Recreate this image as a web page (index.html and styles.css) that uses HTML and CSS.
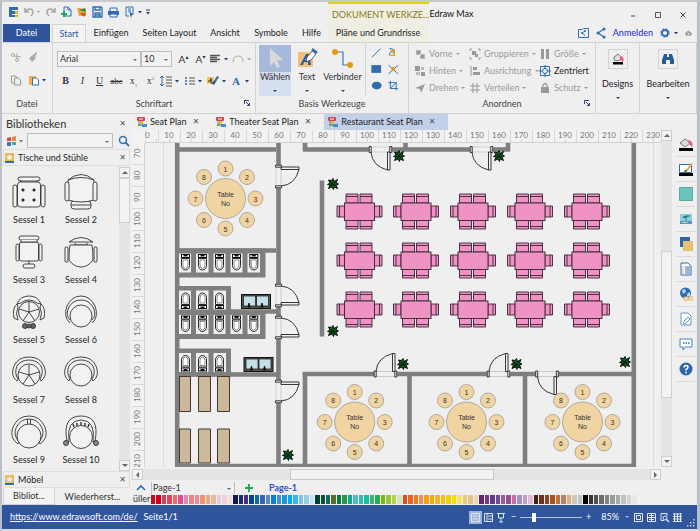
FILE: index.html
```
<!DOCTYPE html>
<html lang="de">
<head>
  <meta charset="UTF-8">
  <meta name="viewport" content="width=device-width, initial-scale=1.0">
  <title>Edraw Max</title>
  <link rel="stylesheet" href="styles.css">
</head>
<body>
  <!-- shared shapes -->
  <svg class="defs" width="0" height="0" aria-hidden="true">
    <defs>
      <symbol id="doc" viewBox="0 0 10 10" overflow="visible">
        <rect x="0" y="0" width="8" height="4" rx="1" fill="#c8464c"/>
        <path d="M2 2h4" stroke="#fff" stroke-width="1"/>
        <path d="M2 4v4h3" stroke="#4a7ebb" fill="none"/>
        <rect x="3" y="4" width="3" height="3" fill="#f0b428"/>
        <rect x="5" y="7" width="5" height="3" fill="#3f8ee0"/>
        <rect x="1" y="7" width="3" height="2" fill="#6ab04c"/>
      </symbol>
      <symbol id="star" viewBox="0 0 9 10">
        <rect width="9" height="8" fill="#e9b85c"/>
        <rect y="8" width="9" height="2" fill="#2f6db0"/>
        <path d="M4.500 1l1 2.200 2.300.2-1.700 1.600.5 2.300-2.100-1.200-2.100 1.200.5-2.300L1.200 3.400l2.300-.2z" fill="#fff"/>
      </symbol>
      <g id="toilet">
        <rect x="-4" y="-9" width="8" height="3" fill="#fff" stroke="#111"/>
        <path d="M-2-9h4v2h-4z" fill="#111"/>
        <path d="M-4-5h8v7a4 4.500 0 0 1-8 0z" fill="#fff" stroke="#111" stroke-width=".9"/>
        <path d="M-2.500-3.500h5v5a2.500 3.500 0 0 1-5 0z" fill="none" stroke="#444" stroke-width=".6"/>
      </g>
      <g id="stalls5">
        <path d="M179 0h86.500v29h-86.500z" fill="#7f7f7f"/>
        <path d="M179 5h12v19h-12zM196 5h12.500v19h-12.500zM213.500 5h12v19h-12zM230.500 5h12v19h-12zM247.500 5h12.500v19h-12.500z" fill="#f0f0f0"/>
        <use href="#toilet" x="185.500" y="15"/><use href="#toilet" x="202.500" y="15"/><use href="#toilet" x="219.500" y="15"/><use href="#toilet" x="236.500" y="15"/><use href="#toilet" x="253.800" y="15"/>
      </g>
      <g id="stalls3">
        <path d="M179 0h52v28h-52z" fill="#7f7f7f"/>
        <path d="M179 4.500h12v19h-12zM196 4.500h12.500v19h-12.500zM213.500 4.500h12.500v19h-12.500z" fill="#f0f0f0"/>
        <g transform="translate(0 13.500) scale(1 -1)"><use href="#toilet" x="185.500"/><use href="#toilet" x="202.500"/><use href="#toilet" x="219.500"/></g>
      </g>
      <g id="sink">
        <rect x=".5" y=".5" width="29" height="14" fill="#555" stroke="#111"/>
        <rect x="2.500" y="2" width="12" height="10" fill="#c4dfe6" stroke="#111" stroke-width=".7"/>
        <rect x="15.500" y="2" width="12" height="10" fill="#c4dfe6" stroke="#111" stroke-width=".7"/>
        <path d="M7 13l1-4 1 4zM20 13l1-4 1 4z" fill="#111" stroke="#111"/>
      </g>
      <g id="seats" stroke="#3a2433" stroke-width=".9" fill="#ef93c5">
        <path d="M-13.500-18h12v9h-12zM.5-18h12v9h-12zM-13.500 8h12v9h-12zM.5 8h12v9h-12z"/>
        <path d="M-22.500-6h7.500v11h-7.500zM15-6h7.500v11H15z"/>
        <path d="M-13.500-15.500h12M.5-15.500h12M-13.500 14.500h12M.5 14.500h12M-20-6v11M20-6v11" fill="none"/>
        <rect x="-15" y="-9" width="30" height="17.500"/>
      </g>
      <g id="round">
        <g fill="#f0d5a3" stroke="#a8a29a" stroke-width=".9">
          <circle r="20"/>
          <circle cy="-30" r="7.500"/><circle cx="21.500" cy="-21.500" r="7.500"/><circle cx="30" r="7.500"/><circle cx="21.500" cy="21.500" r="7.500"/>
          <circle cy="30" r="7.500"/><circle cx="-21.500" cy="21.500" r="7.500"/><circle cx="-30" r="7.500"/><circle cx="-21.500" cy="-21.500" r="7.500"/>
        </g>
        <g class="plan-text">
          <text y="-2">Table</text><text y="7">No</text>
          <text y="-27">1</text><text x="21.500" y="-19">2</text><text x="30" y="3">3</text><text x="21.500" y="24">4</text>
          <text y="33">5</text><text x="-21.500" y="24">6</text><text x="-30" y="3">7</text><text x="-21.500" y="-19">8</text>
        </g>
      </g>
      <g id="plant">
        <path d="M0-5.500l1 3 3.500-2-1.500 3.500 2.500 1-2.500 1 1.500 3.500-3.500-1.500-.5 2.500-1.500-2.500-3.500 1.500 1.500-3.500-2.500-.5 2.500-1.500-1.500-3 3 .5z" fill="#0d5a1c" stroke="#06120a"/>
        <path d="M-3-2l6 4M2-3l-4 6M-3 1h5" stroke="#06120a" stroke-width=".8"/>
      </g>
      <!-- door in a 23 wide opening, swinging down to the right -->
      <g id="door" fill="#f0f0f0" stroke="#222" stroke-width=".9">
        <path d="M0 0h23v5H0z" stroke="#bbb" stroke-width=".6"/>
        <path d="M18.500 5h2.500v18h-2.500z"/>
        <path d="M2 5q1 14 16.500 18" fill="none"/>
        <path d="M.2-.5h2v6h-2zM20.800-.5h2v6h-2z"/>
      </g>
    </defs>
  </svg>

  <header class="titlebar">
    <div class="quick">
      <svg width="152" height="16" viewBox="6 4 152 16" fill="none">
        <path d="M9 7h9v3h-6v1h6v3h-6v1h6v2H9z" fill="#2f6db0"/><path d="M15 11h3v3h-3zM15 15h3v2h-3z" fill="#f0b428"/>
        <path d="M25 8v4h4M25.500 12c2-4 7-4 7.500 0q0 2-2 4M55 8v4h-4M54.500 12c-2-4-7-4-7.500 0q0 2 2 4" stroke="#a8a8a8" stroke-width="1.600"/>
        <path d="M37 11h3l-1.500 2z" fill="#999"/>
        <path d="M64 7h4l3 3v6h-7zM68 7v3h3" stroke="#2f6db0"/><path d="M61 14h6M64 11v6" stroke="#23a565" stroke-width="2"/>
        <path d="M77 8h4l1 1h4v7h-7z" fill="#e7a63a"/><path d="M79 10l6-2 1 4z" fill="#2b8d42"/><path d="M80 13h6l-2 4z" fill="#c65b2c"/>
        <path d="M93 7h8l1 1v9h-9zM95 7v3h5V7M95 17v-4h5v4M95 15h5" stroke="#2f6db0" stroke-width="1.300"/>
        <path d="M108 11h11v4h-11z" fill="#2f6db0"/><path d="M110 11V8h7v3M110 14h7v3h-7z" fill="#efefef" stroke="#2f6db0"/>
        <path d="M126 7h7v7M126 7v9h3M128 9h3M128 11h3" stroke="#2f6db0"/><path d="M129 11l5 4-2 0-1 3z" fill="#2f6db0"/>
        <path d="M138 11h4l-2 2.500zM146 12h4l-2 2.500z" fill="#26406f"/><path d="M146 10h4" stroke="#26406f"/>
      </svg>
    </div>
    <div class="context-title">DOKUMENT WERKZE...</div>
    <h1>Edraw Max</h1>
    <div class="window-buttons">
      <button aria-label="Minimieren"><svg width="8" height="8"><path d="M2 5h4" stroke="#444"/></svg></button>
      <button aria-label="Maximieren"><svg width="8" height="8"><path d="M1.500 1.500h5v5h-5z" fill="none" stroke="#555"/></svg></button>
      <button aria-label="Schließen"><svg width="8" height="8"><path d="M1.500 1.500l5 5M6.500 1.500l-5 5" stroke="#444"/></svg></button>
    </div>
  </header>

  <nav class="menu">
    <button class="menu-file">Datei</button>
    <button class="menu-start">Start</button>
    <button class="menu-insert">Einfügen</button>
    <button class="menu-layout">Seiten Layout</button>
    <button class="menu-view">Ansicht</button>
    <button class="menu-symbols">Symbole</button>
    <button class="menu-help">Hilfe</button>
    <button class="menu-plans">Pläne und Grundrisse</button>
    <div class="account">
      <svg width="28" height="12" viewBox="0 0 28 12" fill="none" stroke="#2f6db0">
        <path d="M.5 2.500h4l1-1h5v9H.5z"/><path d="M7 4L4 6l3 2.500"/><circle cx="7" cy="4" r=".7"/><circle cx="4" cy="6" r=".7"/>
        <path d="M26 2l-6 4 6 4" stroke-width="1.200"/><g fill="#2f6db0" stroke="none"><circle cx="26" cy="2" r="1.500"/><circle cx="20" cy="6" r="1.500"/><circle cx="26" cy="10" r="1.500"/></g>
      </svg>
      <a href="#login">Anmelden</a>
      <svg width="32" height="12" viewBox="0 0 32 12" fill="none">
        <circle cx="5" cy="6" r="3" stroke="#2f6db0" stroke-width="1.800"/><circle cx="5" cy="6" r="4.300" stroke="#2f6db0" stroke-dasharray="1.700 1.700"/>
        <path d="M14 5h4l-2 2.500z" fill="#26406f"/><path d="M26 8h5V6l-2.500-2L26 6zM26.500 7l2-1.500 2 1.500" stroke="#666" stroke-width=".8"/>
      </svg>
    </div>
  </nav>

  <section class="ribbon">
    <div class="group group-file">
      <div class="group-body">
        <svg width="42" height="48" viewBox="6 44 42 48" fill="none">
          <g stroke="#aaa"><circle cx="13" cy="56" r="1.500"/><circle cx="17" cy="61" r="1.500"/><path d="M14 57l7 1M17 60V54"/></g>
          <path d="M29 59l4-3 3 3-4 4zM33 56l3-3 1 1-2 4z" fill="#aaa"/>
          <g stroke="#999"><path d="M11.500 77h4l2 2v5h-6z"/><path d="M14.500 79h4l2 2v5h-6z" fill="#efefef"/></g>
          <path d="M29 77h7v9h-7z" fill="#f0b050"/><path d="M32.500 79h4l2 2v5h-6z" fill="#fff" stroke="#2f6db0"/><path d="M42 80h4l-2 2.500z" fill="#26406f"/>
        </svg>
      </div>
      <h2>Datei</h2>
    </div>

    <div class="group group-font">
      <div class="group-body">
        <div class="font-row">
          <label class="select-wrap font-name"><select aria-label="Schriftart"><option>Arial</option></select></label>
          <label class="select-wrap font-size"><select aria-label="Schriftgröße"><option>10</option></select></label>
          <button class="big-a">A<sup>▴</sup></button>
          <button class="big-a">A<sup>▾</sup></button>
          <svg width="42" height="14" viewBox="0 0 42 14" fill="none"><path d="M1 3.500h10M1 5.500h7M1 7.500h10M1 9.500h7" stroke="#555" stroke-width="1.400"/><path d="M15 6h4l-2 2.500z" fill="#26406f"/><path d="M24 10q0-6 5-6t5 6" stroke="#aaa"/><path d="M38 6h4l-2 2.500z" fill="#aaa"/></svg>
        </div>
        <div class="style-row">
          <button><b>B</b></button><button><i>I</i></button><button><u>U</u></button><button class="strike">abc</button>
          <button>x<sub>1</sub></button><button>x<sup>2</sup></button>
          <svg width="92" height="14" viewBox="160 74 92 14" fill="none">
            <path d="M163 76v10M161 78l2-2 2 2M161 84l2 2 2-2" stroke="#2f6db0"/><path d="M167 77h6M167 80h6M167 83h6M167 86h6" stroke="#555"/>
            <path d="M176 80h4l-2 2.500zM199 80h4l-2 2.500zM223 80h4l-2 2.500zM246 80h4l-2 2.500z" fill="#26406f"/>
            <path d="M186 78h2M186 81h2M186 84h2" stroke="#2f6db0" stroke-width="1.500"/><path d="M190 78h6M190 81h6M190 84h6" stroke="#555"/>
            <path d="M208 77h7v7h-7z" fill="#f5c25b"/><path d="M213 84l5-8 2 1-5 8z" fill="#2f6db0"/><path d="M209 81h3v-2M212 78v5h3v-2" stroke="#333"/>
            <text class="font-color" x="233" y="85">A</text>
          </svg>
        </div>
      </div>
      <h2>Schriftart</h2>
      <svg class="launcher" width="6" height="6"><path d="M.5 4V.5H5M2 2l3 3M5.500 3v2.500H3" fill="none" stroke="#26406f"/></svg>
    </div>

    <div class="group group-tools">
      <div class="group-body">
        <button class="tool selected"><svg width="24" height="26"><path d="M7 3l13 12-6 .5 3 6-3 1.500-3-6-4 4z" fill="#d8d8d8"/></svg>Wählen<i class="arrow"></i></button>
        <button class="tool"><svg width="24" height="26"><path d="M3 7h15v15H3z" fill="#f2c078"/><path d="M5 20h3l1-3h4v3h3l-2-11h-3zM10 15l3-4v4z" fill="#2560a5"/><path d="M12 12l5-6 4 3-5 6-5 2z" fill="#fff" stroke="#335" stroke-width=".8"/><path d="M17 4l5 4" stroke="#2f6db0" stroke-width="2.500"/></svg>Text<i class="arrow"></i></button>
        <button class="tool tool-wide"><svg width="24" height="26"><path d="M4 7h8v13h8" fill="none" stroke="#3a79bd" stroke-width="1.200"/><circle cx="4" cy="7" r="3" fill="#e79a0c"/><circle cx="19" cy="20" r="3" fill="#e79a0c"/></svg>Verbinder<i class="arrow"></i></button>
        <svg class="shapes" width="38" height="52" viewBox="368 44 38 52" fill="none">
          <path d="M374 58l9-9M392 49q6 0 5 4-5-2-5 3" stroke="#2f74b8"/><path d="M393 51h4v5h-4" stroke="#e79a0c" stroke-width="1.500"/>
          <path d="M373.500 66h10v8h-10z" fill="#2f6db0"/><path d="M391 66l10 9M401 66l-10 9" stroke="#2f74b8"/><circle cx="396" cy="70" r="2" fill="#e79a0c"/>
          <ellipse cx="379" cy="87" rx="5" ry="4" fill="#2f6db0"/><path d="M393 82v8h8M391 84h8v8M393 90l6-6" stroke="#2f6db0"/>
        </svg>
      </div>
      <h2>Basis Werkzeuge</h2>
    </div>

    <div class="group group-arrange">
      <div class="group-body arrange">
        <button><svg width="12" height="12"><path d="M2 2h5v5H2zM6 6h5v5H6z" fill="#999" stroke="#efefef" stroke-width=".6"/></svg>Vorne<i class="arrow"></i></button>
        <button><svg width="12" height="12"><path d="M1 3V1h2M9 1h2v2M11 9v2H9M3 11H1V9" stroke="#999" fill="none"/><path d="M3 3h4v4H3zM6 6h3v3H6z" fill="#999"/></svg>Gruppieren<i class="arrow"></i></button>
        <button><svg width="12" height="12"><path d="M2 1h3v10H2zM7 1h3v10H7z" fill="#999"/></svg>Größe<i class="arrow"></i></button>
        <button><svg width="12" height="12"><path d="M1 1h5v5H1zM7 7h4v4H7z" fill="#999"/><path d="M7 2h3v3H7zM2 7h4v3H2z" fill="#bbb"/></svg>Hinten<i class="arrow"></i></button>
        <button><svg width="12" height="12"><path d="M2 1v10" stroke="#999"/><path d="M4 2h4v3H4zM4 7h7v3H4z" fill="#999"/></svg>Ausrichtung<i class="arrow"></i></button>
        <button class="on"><svg width="12" height="12"><path d="M1.500 1.500h9v9h-9z" fill="none" stroke="#2f6db0"/><circle cx="6" cy="6" r="2.500" fill="none" stroke="#2f6db0"/><path d="M6 0v4M6 8v4M0 6h4M8 6h4" stroke="#2f6db0"/></svg>Zentriert</button>
        <button><svg width="12" height="12"><path d="M1 6l10-4-4 9-1-4z" fill="#999"/></svg>Drehen<i class="arrow"></i></button>
        <button><svg width="12" height="12"><path d="M1 4h10M1 8h10M4 1v10M8 1v10" stroke="#999"/></svg>Verteilen<i class="arrow"></i></button>
        <button><svg width="12" height="12"><path d="M2 5h8v6H2z" fill="#999"/><path d="M4 5V3q2-3 4 0v2" fill="none" stroke="#999" stroke-width="1.300"/></svg>Schutz<i class="arrow"></i></button>
      </div>
      <h2>Anordnen</h2>
      <svg class="launcher" width="6" height="6"><path d="M.5 4V.5H5M2 2l3 3M5.500 3v2.500H3" fill="none" stroke="#26406f"/></svg>
    </div>

    <div class="group group-single">
      <button class="single"><span><svg width="14" height="14"><path d="M3 5l4-3 4 4-4 3-4-1z" fill="#ddd" stroke="#777"/><path d="M9 4q5 0 3 6l-3-2z" fill="#df6288"/><path d="M2 10h10v2.500H2z" fill="#000"/></svg></span>Designs<i class="arrow"></i></button>
    </div>
    <div class="group group-single group-last">
      <button class="single"><span><svg width="14" height="14"><path d="M3 2h3v3h2V2h3l2 6v4H9V8H5v4H1V8z" fill="#245b96"/></svg></span>Bearbeiten<i class="arrow"></i></button>
    </div>
  </section>

  <main class="workspace">
    <aside class="library">
      <div class="library-head"><h2>Bibliotheken</h2><button class="close" aria-label="Schließen">✕</button></div>
      <div class="library-search">
        <svg width="18" height="12"><path d="M1 3l4-1v4H1z" fill="#d8473a"/><path d="M6 2l4-1v5H6z" fill="#e58a4d"/><path d="M1 7h4v4H1z" fill="#3979c4"/><path d="M6 7h4v3H6z" fill="#49a6a0"/><path d="M13 5h4l-2 2.500z" fill="#777"/></svg>
        <label class="select-wrap"><select aria-label="Suche"><option></option></select></label>
        <button aria-label="Suchen"><svg width="12" height="12" fill="none" stroke="#2f74b8"><circle cx="5" cy="5" r="3.500" stroke-width="1.500"/><path d="M7.500 7.500L11 11" stroke-width="1.800"/></svg></button>
      </div>
      <div class="section-head"><svg width="9" height="10"><use href="#star"/></svg><span>Tische und Stühle</span><button class="close" aria-label="Schließen">✕</button></div>
      <div class="library-list">
        <div class="chairs">
          <figure><svg viewBox="-18 -18 36 36"><rect x="-11" y="-15" width="22" height="4" rx="2"/><rect x="-11.500" y="-10" width="23" height="25" rx="3"/><path d="M-9-12l1 2M9-12l-1 2"/><rect x="-16" y="-7" width="4" height="22" rx="2"/><rect x="12" y="-7" width="4" height="22" rx="2"/><path d="M-7-3h2v2h-2zM4-3h2v2H4zM-7 7h2v2h-2zM4 7h2v2H4z" fill="#222"/></svg><figcaption>Sessel 1</figcaption></figure>
          <figure><svg viewBox="-18 -18 36 36"><rect x="-10" y="9" width="20" height="8" rx="3"/><path d="M-10 13h20"/><path d="M-13-12q13-11 26 0v20q-13 4-26 0zM-13-12q13-5 26 0"/><rect x="-16" y="-10" width="4" height="19" rx="2"/><rect x="12" y="-10" width="4" height="19" rx="2"/></svg><figcaption>Sessel 2</figcaption></figure>
          <figure><svg viewBox="-18 -18 36 36"><rect x="-10" y="-16" width="20" height="4" rx="2"/><rect x="-9.500" y="-10" width="19" height="19" rx="2"/><path d="M-8-12v2h16v-2M0 9v4"/><rect x="-13" y="-8" width="3" height="17" rx="1.500"/><rect x="10" y="-8" width="3" height="17" rx="1.500"/><rect x="-6" y="12" width="12" height="4" rx="2"/></svg><figcaption>Sessel 3</figcaption></figure>
          <figure><svg viewBox="-18 -18 36 36"><path d="M-12-10q12-9 24 0zM-6-9v2H6v-2"/><path d="M-11-7h22q1 5 1 15-5 7-12 7t-12-7q0-10 1-15z"/><rect x="-16" y="-5" width="3" height="15" rx="1"/><rect x="13" y="-5" width="3" height="15" rx="1"/></svg><figcaption>Sessel 4</figcaption></figure>
          <figure><svg viewBox="-18 -18 36 36"><circle r="10.500"/><path d="M0 0V-10M0 0L10-3M0 0L-10-3M0 0l6 9M0 0l-6 9M-12-8q3-8 12-8t12 8l-4-1q-8-6-16 0z"/><path d="M-12-8q-5 4-3 14l4 2q-3-7 0-13zM12-8q5 4 3 14l-4 2q3-7 0-13z"/><circle cx="-4" cy="14" r="2.500" fill="#666"/><circle cx="4" cy="14" r="2.500" fill="#666"/><circle cy="14" r="2" fill="#666"/></svg><figcaption>Sessel 5</figcaption></figure>
          <figure><svg viewBox="-18 -18 36 36"><path d="M-11 11Q-18 5-14-6-9-16 0-16t14 10q4 11-3 17M-11 8q-5-5-1-13 4-7 12-7t12 7q4 8-1 13"/><circle cy="4" r="11"/></svg><figcaption>Sessel 6</figcaption></figure>
          <figure><svg viewBox="-18 -18 36 36"><path d="M-12 9q-7-5-3-15 4-9 15-9t15 9q4 10-3 15l-1-2q4-6 1-13-4-6-12-6t-12 6q-3 7 1 13z"/><circle cy="3" r="11"/><path d="M0 3V-7M0 3l10-3M0 3l-10-3M0 3l6 9M0 3l-6 9"/></svg><figcaption>Sessel 7</figcaption></figure>
          <figure><svg viewBox="-18 -18 36 36"><path d="M-12 9q-7-5-3-15 4-9 15-9t15 9q4 10-3 15l-1-2q4-6 1-13-4-6-12-6t-12 6q-3 7 1 13z"/><circle cy="3" r="11"/></svg><figcaption>Sessel 8</figcaption></figure>
          <figure><svg viewBox="-18 -18 36 36"><path d="M-11 12q-9-6-5-17 5-11 16-11t16 11q4 11-5 17l-1-2q6-7 3-14-4-9-13-9t-13 9q-3 7 3 14zM-1.500-13v5M1.500-13v5"/><circle cy="4" r="12"/></svg><figcaption>Sessel 9</figcaption></figure>
          <figure><svg viewBox="-18 -18 36 36"><path d="M-14 9q-5-25 14-25t14 25l-2 1q3-22-12-22t-12 22z"/><circle cy="5" r="11.500"/><path d="M-8-8l1 3M-4-9v3M0-10v3M4-9v3M8-8l-1 3" stroke-width="1.400"/><circle cx="-15" cy="11" r="2.500" fill="#888"/><circle cx="15" cy="11" r="2.500" fill="#888"/></svg><figcaption>Sessel 10</figcaption></figure>
        </div>
        <div class="scroll-v"><button aria-label="Hoch"><i class="up"></i></button><div class="thumb"></div><button aria-label="Runter"><i class="down"></i></button></div>
      </div>
      <div class="section-head"><svg width="9" height="10"><use href="#star"/></svg><span>Möbel</span><button class="close" aria-label="Schließen">✕</button></div>
      <div class="library-tabs"><button class="active">Bibliot...</button><button>Wiederherst...</button></div>
    </aside>

    <section class="document">
      <div class="doc-tabs">
        <button class="doc-tab"><svg width="10" height="10"><use href="#doc"/></svg>Seat Plan<span class="close">✕</span></button>
        <button class="doc-tab"><svg width="10" height="10"><use href="#doc"/></svg>Theater Seat Plan<span class="close">✕</span></button>
        <button class="doc-tab active"><svg width="10" height="10"><use href="#doc"/></svg>Restaurant Seat Plan<span class="close">✕</span></button>
      </div>
      <div class="sheet">
        <div class="corner"></div>
        <div class="ruler ruler-x" data-from="0" data-to="230"></div>
        <div class="scroll-v sheet-scroll"><button aria-label="Hoch"><i class="up"></i></button><div class="thumb"></div><button aria-label="Runter"><i class="down"></i></button></div>
        <div class="ruler ruler-y" data-from="70" data-to="210"></div>
        <div class="plan">
          <svg width="516" height="327" viewBox="145 142 516 327">
            <path d="M163.500 142v327M653.500 142v327" stroke="#dcdcdc"/>
            <!-- walls -->
            <path d="M177.200 142v323h456.600V142M179 148.500h97M179 249.500h97M278.500 142v321M179 310.500h99M179 373.500h99M303 148.500h207M305 142v8M405.500 142v5M508 142v8M322 179.500v156M302.500 373h331M305 373v90M409.500 373v90M525 373v90" fill="none" stroke="#7f7f7f" stroke-width="4.600"/>
            <use href="#stalls5" y="247.500"/>
            <use href="#stalls3" y="285"/>
            <use href="#stalls5" y="309"/>
            <use href="#stalls3" y="347.500"/>
            <use href="#sink" x="241" y="293"/>
            <use href="#sink" x="243.500" y="356"/>
            <g fill="#cdb89c" stroke="#3f3a33">
              <path d="M179.500 375.500h11v35h-11zM198.500 375.500h12v35h-12zM217.500 375.500h12v35h-12zM179.500 428h11v34h-11zM198.500 428h12v34h-12zM217.500 428h12v34h-12z"/>
            </g>
            <!-- doors -->
            <use href="#door" transform="translate(369 146)"/>
            <use href="#door" transform="translate(470 146)"/>
            <use href="#door" transform="translate(374 375.500) scale(1 -1)"/>
            <use href="#door" transform="translate(487 375.500) scale(1 -1)"/>
            <use href="#door" transform="translate(535.500 370.500)"/>
            <use href="#door" transform="translate(276 187) rotate(-90)"/>
            <use href="#door" transform="translate(276 283) rotate(90) scale(1 -1)"/>
            <use href="#door" transform="translate(276 315) rotate(90) scale(1 -1)"/>
            <use href="#door" transform="translate(276 402) rotate(-90)"/>
            <!-- tables for six -->
            <use href="#seats" x="359.500" y="211"/><use href="#seats" x="416" y="211"/><use href="#seats" x="473" y="211"/><use href="#seats" x="530" y="211"/><use href="#seats" x="587" y="211"/>
            <use href="#seats" x="359.500" y="260"/><use href="#seats" x="416" y="260"/><use href="#seats" x="473" y="260"/><use href="#seats" x="530" y="260"/><use href="#seats" x="587" y="260"/>
            <use href="#seats" x="359.500" y="309"/><use href="#seats" x="416" y="309"/><use href="#seats" x="473" y="309"/><use href="#seats" x="530" y="309"/><use href="#seats" x="587" y="309"/>
            <use href="#round" x="225.500" y="197.500"/>
            <use href="#round" x="354.700" y="421"/>
            <use href="#round" x="466.500" y="421"/>
            <use href="#round" x="582.500" y="421"/>
            <use href="#plant" x="399" y="155"/><use href="#plant" x="499" y="155"/><use href="#plant" x="333" y="183"/><use href="#plant" x="333" y="330"/>
            <use href="#plant" x="403" y="363"/><use href="#plant" x="516.500" y="363"/><use href="#plant" x="625" y="361"/><use href="#plant" x="288" y="454"/>
          </svg>
        </div>
        <div class="scroll-h"><button aria-label="Links"><i class="left"></i></button><div class="thumb"></div><button aria-label="Rechts"><i class="right"></i></button></div>
      </div>
      <div class="pages">
        <svg width="10" height="8" fill="none"><path d="M1 6l4-4 4 4" stroke="#2f6db0" stroke-width="1.600"/></svg>
        <label class="select-wrap"><select aria-label="Seite"><option>Page-1</option></select></label>
        <button aria-label="Neue Seite"><svg width="10" height="10"><path d="M5 1v8M1 5h8" stroke="#1ca354" stroke-width="1.800"/></svg></button>
        <a href="#page-1">Page-1</a>
      </div>
      <div class="palette"><span class="palette-label">üller</span><div class="swatches"></div></div>
    </section>

    <aside class="tools">
      <button aria-label="Füllung"><svg viewBox="0 0 14 14"><path d="M1 6l5-4 5 4-5 4z" fill="#ddd" stroke="#777"/><path d="M9 3q6 1 4 7l-3-3z" fill="#df6288"/><path d="M0 11h14v3H0z" fill="#000"/></svg></button>
      <button aria-label="Linie"><svg viewBox="0 0 14 14"><path d="M.5 2.500h12v8H.5z" fill="#fff" stroke="#2f6db0"/><path d="M6 9l6-8 2 1-6 8z" fill="#e3ac55"/><path d="M5 10l1-2 2 1z"/><path d="M0 11h14v3H0z" fill="#000"/></svg></button>
      <button aria-label="Farbe"><svg viewBox="0 0 14 14"><path d="M.5.5h13v13H.5z" fill="#6cc4bd" stroke="#58aaa5"/></svg></button>
      <button aria-label="Bild"><svg viewBox="0 0 14 14"><path d="M1 2h12v10H1z" fill="#93cbe6"/><path d="M1 9h12v3H1z" fill="#4b96c4"/><path d="M3 6q3-4 9-2l-4 1-1 6H6l1-5z" fill="#258467"/><path d="M2 11q4-3 8 0z" fill="#e8cf91"/></svg></button>
      <button aria-label="Ebenen"><svg viewBox="0 0 14 14"><path d="M1 0h10v10H1z" fill="#2f66a8"/><path d="M4 4h10v10H4z" fill="#e8c073"/></svg></button>
      <button aria-label="Daten"><svg viewBox="0 0 14 14"><path d="M2 1h7l3 3v9H2z" fill="#fff" stroke="#2f6db0"/><path d="M6 5h5M6 7h5M6 9h5M6 11h5" stroke="#2f6db0"/><path d="M3.500 5h1M3.500 7h1M3.500 9h1M3.500 11h1" stroke="#d8473a"/></svg></button>
      <button aria-label="Hyperlink"><svg viewBox="0 0 14 14"><circle cx="6.500" cy="6" r="5.500" fill="#2f6db0"/><path d="M3 3l3-1 1 3-3 2zM8 7l3-2v4l-3 1z" fill="#b9d6ef"/><path d="M5 10h4v3H5zM10 10h4v3h-4z" fill="#efefef" stroke="#e3ac55"/></svg></button>
      <button aria-label="Anhang"><svg viewBox="0 0 14 14"><path d="M2 1h7l3 3v9H2z" fill="#fff" stroke="#6a96c5"/><path d="M5 9l4-4 2 2-5 5-2-1 4-5" fill="none" stroke="#6a96c5"/></svg></button>
      <button aria-label="Kommentar"><svg viewBox="0 0 14 14"><path d="M1 2h12v8H6l-2 3v-3H1z" fill="#fff" stroke="#4a86c0"/><path d="M4 6h1.500M6.500 6H8M9 6h1.500" stroke="#2f6db0" stroke-width="1.500"/></svg></button>
      <button aria-label="Hilfe"><svg viewBox="0 0 14 14"><circle cx="7" cy="7" r="6.500" fill="#2f66a8"/><path d="M5 5.500q0-2 2-2t2 1.700Q9 6.500 7 7.500v1" fill="none" stroke="#fff" stroke-width="1.500"/><path d="M6.200 9.700h1.600v1.500H6.200z" fill="#fff"/></svg></button>
    </aside>
  </main>

  <footer class="status">
    <a href="https://www.edrawsoft.com/de/">https://www.edrawsoft.com/de/</a>
    <span>Seite1/1</span>
    <div class="view-modes">
      <svg width="38" height="13" fill="none" stroke="#dfe6f4"><path d="M0 0h13v13H0z" fill="#9fb4dc" stroke="none"/><path d="M2.500 2.500h8v8h-8zM4 5h5M4 8h5"/><path d="M15.500 2.500h8v8h-8zM18 2.500v8M19 5h4M19 8h4"/><path d="M28 2.500h8M29.500 3v4h5V3M32 7v4M30 11h4"/></svg>
    </div>
    <div class="zoom">
      <span>−</span><input type="range" min="0" max="100" value="20" aria-label="Zoom"><span>+</span>
      <output>85%</output><i class="arrow"></i>
    </div>
    <svg width="52" height="13" fill="none" stroke="#dfe6f4"><path d="M1.500 2.500h8v8h-8z"/><path d="M3.500 4.500h4v4h-4z"/><path d="M14.500 2.500h8v8h-8zM14.500 6.500h8M18.500 2.500v8M16 4.500h5M16 8.500h5"/><path d="M34 5V2.500h-6v7h3"/><circle cx="32" cy="7" r="2"/><path d="M33 8l3 3" stroke-width="1.500"/><path d="M40 3h9M40 5.500h9M40 8h9M40 10.500h9M41.500 2v9M44.500 2v9M47.500 2v9"/></svg>
    <svg class="grip" width="9" height="9" fill="#c9d5ec"><path d="M7 1h1.500v1.500H7zM7 4h1.500v1.500H7zM4 4h1.500v1.500H4zM7 7h1.500v1.500H7zM4 7h1.500v1.500H4zM1 7h1.500v1.500H1z"/></svg>
  </footer>

  <script src="script.js"></script>
</body>
</html>
```
FILE: styles.css
```
:root {
  --bg: #efefef;
  --line: #d2d2d2;
  --blue: #2f559d;
  --text: #333;
  --muted: #9a9a9a;
}
* {
  box-sizing: border-box;
  margin: 0;
  padding: 0;
}
html, body {
  height: 100%;
}
body {
  display: flex;
  flex-direction: column;
  overflow: hidden;
  font: 9px/12px Lato, sans-serif;
  color: var(--text);
  background: var(--bg);
  border: 1px solid #b9c0cc;
  border-width: 2px 3px 2px 2px;
  border-top-color: #c6c9c8;
  border-bottom-color: #d8d8d8;
}
button, select, input {
  font: inherit;
  color: inherit;
}
button {
  background: none;
  border: none;
  white-space: nowrap;
}
h1, h2 {
  font-size: 9px;
  font-weight: 400;
}
svg {
  display: block;
  flex: none;
}
.defs {
  position: absolute;
}
.arrow {
  display: inline-block;
  border: 2px solid transparent;
  border-top-color: #26406f;
  border-bottom: 0;
}
.close {
  font: 8px/12px "DejaVu Sans", sans-serif;
  color: #555;
}
.select-wrap {
  position: relative;
  display: flex;
}
.select-wrap::after {
  content: "";
  position: absolute;
  right: 4px;
  top: 50%;
  border: 2px solid transparent;
  border-top-color: #666;
  border-bottom: 0;
}
.select-wrap select {
  appearance: none;
  width: 100%;
  padding: 0 2px;
  border: 1px solid #bdbdbd;
  background: #f2f2f2;
}

/* title and menu */
.titlebar {
  display: flex;
  flex: 0 0 22px;
}
.quick {
  flex: 0 0 326px;
  padding: 2px 0 0 4px;
}
.context-title {
  flex: 0 0 100px;
  padding: 5px 0 0 4px;
  color: #8a7a20;
  background: #efeee3;
  border-top: 2px solid #e2cf1a;
  white-space: nowrap;
}
.titlebar h1 {
  color: #111;
  padding-top: 6px;
  white-space: nowrap;
}
.window-buttons {
  display: flex;
  gap: 17px;
  margin-left: auto;
  padding: 4px 10px 0 0;
}
.menu {
  display: flex;
  flex: 0 0 18px;
  border-bottom: 1px solid var(--line);
}
.menu button {
  color: #222;
}
.menu .menu-file {
  width: 47px;
  margin: 0 2px 0 1px;
  color: #fff;
  background: var(--blue);
}
.menu .menu-start {
  width: 34px;
  height: 18px;
  color: var(--blue);
  background: #f3f3f3;
  border: 1px solid var(--line);
  border-bottom: 0;
}
.menu-insert { width: 50px; }
.menu-layout { width: 67px; }
.menu-view { width: 44px; }
.menu-symbols { width: 48px; }
.menu-help { width: 33px; }
.menu .menu-plans {
  width: 100px;
  background: #efeee3;
}
.account {
  display: flex;
  align-items: center;
  gap: 7px;
  margin-left: auto;
  padding-right: 5px;
}
.account a {
  color: #2020e8;
  text-decoration: none;
}

/* ribbon */
.ribbon {
  display: flex;
  flex: 0 0 71px;
  border-bottom: 1px solid var(--line);
}
.group {
  position: relative;
  display: flex;
  flex-direction: column;
  border-right: 1px solid var(--line);
}
.group-body {
  flex: 1;
}
.group h2 {
  height: 15px;
  text-align: center;
  color: #444;
}
.launcher {
  position: absolute;
  right: 5px;
  bottom: 7px;
}
.group-file { flex: 0 0 51px; }
.group-file .group-body { padding-left: 4px; }
.group-font { flex: 0 0 203px; }
.group-tools { flex: 0 0 153px; }
.group-arrange { flex: 1 0 186px; }
.group-single { flex: 0 0 44px; }
.group-last { flex: 0 0 57px; }
.font-row, .style-row {
  display: flex;
  align-items: center;
}
.font-row {
  padding: 8px 0 0 4px;
}
.font-row select {
  height: 16px;
}
.font-name { width: 84px; }
.font-size { width: 31px; margin-right: 3px; }
.big-a {
  width: 17px;
  font-size: 10px;
}
.font-row sup {
  font: 6px/6px "DejaVu Sans", sans-serif;
}
.style-row {
  padding: 7px 0 0 4px;
}
.style-row button {
  width: 17px;
  font: 10px/14px "Liberation Serif", serif;
}
.style-row .strike {
  font: 8px/14px Lato, sans-serif;
  text-decoration: line-through;
}
.style-row sub, .style-row sup {
  font-size: 5px;
  line-height: 5px;
  color: #2f6db0;
}
.font-color {
  font: bold 11px "Liberation Serif", serif;
  fill: #2f6db0;
}
.group-tools .group-body {
  display: flex;
  padding-left: 3px;
}
.tool {
  display: flex;
  flex-direction: column;
  align-items: center;
  width: 32px;
  height: 51px;
  margin-top: 2px;
}
.tool-wide {
  width: 39px;
}
.tool .arrow {
  margin-top: 7px;
}
.tool.selected {
  background: linear-gradient(#a6b9dc 27px, #d6dff0 27px);
}
.shapes {
  margin-left: 3px;
  border-left: 1px solid var(--line);
}
.arrange {
  display: grid;
  grid-template-columns: 55px 70px 50px;
  grid-template-rows: repeat(3, 17px);
  padding: 2px 0 0 5px;
}
.arrange button {
  display: flex;
  align-items: center;
  gap: 3px;
  color: var(--muted);
}
.arrange .arrow {
  border-top-color: var(--muted);
}
.arrange .on {
  color: #222;
}
.single {
  display: flex;
  flex-direction: column;
  align-items: center;
  color: #222;
}
.single span {
  margin: 6px 0 9px;
  padding: 2px;
  border: 1px solid var(--line);
}
.single .arrow {
  margin-top: 7px;
}

/* libraries */
.workspace {
  display: flex;
  flex: 1;
  min-height: 0;
}
.library {
  display: flex;
  flex-direction: column;
  flex: 0 0 130px;
  padding: 2px 2px 0 1px;
}
.library-head {
  display: flex;
  justify-content: space-between;
  height: 16px;
  padding: 0 4px 0 3px;
}
.library-head h2 {
  font-size: 11px;
  line-height: 15px;
}
.library-search {
  display: flex;
  align-items: center;
  gap: 3px;
  height: 17px;
  padding-left: 3px;
}
.library-search .select-wrap {
  flex: 1;
  margin-right: 2px;
}
.library-search select {
  height: 15px;
}
.section-head {
  display: flex;
  flex: none;
  align-items: center;
  gap: 4px;
  height: 17px;
  padding: 0 3px 0 1px;
  color: #222;
  border: 1px solid #dedede;
}
.section-head .close {
  margin-left: auto;
}
.library-list {
  display: flex;
  flex: 1;
  min-height: 0;
  padding-top: 1px;
}
.chairs {
  display: grid;
  grid-template-columns: 52px 52px;
  grid-auto-rows: 60px;
  flex: 1;
  overflow: hidden;
}
.chairs figure {
  padding-top: 7px;
  text-align: center;
}
.chairs svg {
  width: 36px;
  height: 36px;
  margin: 0 auto 4px;
  fill: #f2f2f2;
  stroke: #333;
  stroke-width: .9;
}
.chairs figcaption {
  color: #222;
}
.scroll-v {
  display: flex;
  flex-direction: column;
  width: 11px;
  background: #e4e4e4;
}
.scroll-v button, .scroll-h button {
  display: flex;
  flex: 0 0 11px;
  align-items: center;
  justify-content: center;
  background: #f2f2f2;
  border: 1px solid #cfcfcf;
}
.scroll-v .thumb {
  height: 45px;
  margin-bottom: auto;
  background: #f2f2f2;
  border: 1px solid #cfcfcf;
}
.up, .down, .left, .right {
  border: 3px solid transparent;
}
.up { border-bottom-color: #666; border-top: 0; }
.down { border-top-color: #666; border-bottom: 0; }
.left { border-right-color: #666; border-left: 0; }
.right { border-left-color: #666; border-right: 0; }
.library-tabs {
  display: flex;
  flex: 0 0 17px;
}
.library-tabs button {
  flex: 1 0 auto;
}
.library-tabs .active {
  flex: 0 0 52px;
  background: #f3f3f3;
  border: 1px solid var(--line);
  border-top: 0;
}

/* document */
.document {
  display: flex;
  flex-direction: column;
  flex: 1;
  min-width: 0;
}
.doc-tabs {
  display: flex;
  height: 16px;
  padding-left: 1px;
}
.doc-tab {
  display: flex;
  align-items: center;
  gap: 3px;
  height: 16px;
  padding-left: 4px;
  color: #222;
}
.doc-tab .close {
  padding: 0 13px 0 3px;
}
.doc-tab.active {
  background: #c2d0ea;
}
.sheet {
  display: grid;
  grid-template: 13px minmax(0, 1fr) 14px / 13px minmax(0, 1fr) 12px;
  flex: 1;
  min-height: 0;
}
.corner, .ruler {
  background: #f2f2f2;
}
.ruler {
  display: flex;
  overflow: hidden;
  font-size: 8px;
  color: #777;
}
.ruler-x {
  border-bottom: 1px solid var(--line);
}
.ruler-x span {
  flex: 0 0 22px;
  line-height: 10px;
  text-align: center;
  background: linear-gradient(#d8d8d8, #d8d8d8) 0 100% / 1px 12px no-repeat, linear-gradient(#d8d8d8, #d8d8d8) 11px 100% / 1px 3px no-repeat;
}
.ruler-x span:first-child {
  flex-basis: 13px;
  text-align: left;
}
.ruler-y {
  flex-direction: column;
  border-right: 1px solid var(--line);
}
.ruler-y span {
  flex: 0 0 22px;
  width: 12px;
  line-height: 11px;
  text-align: center;
  writing-mode: vertical-rl;
  transform: rotate(180deg);
  border-top: 1px solid #d8d8d8;
}
.sheet-scroll {
  grid-column: 3;
  grid-row: 1 / 3;
}
.sheet-scroll .thumb {
  height: 147px;
  margin: auto 0 58px;
}
.plan {
  overflow: hidden;
}
.plan-text {
  font: 7px "Liberation Sans", sans-serif;
  text-anchor: middle;
  fill: #333;
}
.scroll-h {
  display: flex;
  grid-column: 1 / 4;
  margin: 2px 12px 1px 0;
  background: #e4e4e4;
}
.scroll-h .thumb {
  width: 204px;
  margin: 0 auto 0 147px;
  background: #f2f2f2;
  border: 1px solid #c8c8c8;
}
.pages {
  display: flex;
  align-items: center;
  gap: 5px;
  height: 13px;
  padding-left: 4px;
}
.pages .select-wrap {
  width: 84px;
  margin-right: 4px;
}
.pages select {
  height: 12px;
  padding: 0 1px;
  background: none;
  border-width: 0 1px;
}
.pages a {
  padding-left: 10px;
  font-weight: 700;
  color: #2b50c0;
  text-decoration: none;
}
.palette {
  display: flex;
  height: 11px;
  line-height: 10px;
}
.palette-label {
  flex: 0 0 19px;
  padding-left: 1px;
}
.swatches {
  display: flex;
  flex: 0 1 486px;
  gap: 1px;
  padding: 1px 0;
}
.swatches i {
  flex: 1;
}
.tools {
  display: flex;
  flex-direction: column;
  flex: 0 0 24px;
  padding: 18px 2px 0 3px;
}
.tools button {
  display: flex;
  align-items: center;
  justify-content: center;
  height: 25px;
  border-bottom: 1px solid #dadada;
}
.tools svg {
  width: 14px;
  height: 14px;
}

/* status bar */
.status {
  position: relative;
  display: flex;
  flex: 0 0 24px;
  align-items: center;
  padding: 0 12px 0 8px;
  color: #fff;
  background: var(--blue);
}
.status a {
  margin-right: 6px;
  color: #fff;
}
.view-modes {
  margin: 0 4px 0 auto;
}
.zoom {
  display: flex;
  align-items: center;
  gap: 4px;
  margin-right: 4px;
}
.zoom input {
  appearance: none;
  width: 62px;
  height: 1px;
  background: #b5c3e0;
}
.zoom input::-webkit-slider-thumb {
  appearance: none;
  width: 4px;
  height: 9px;
  background: #fff;
}
.zoom output {
  margin: 0 2px 0 6px;
}
.zoom .arrow {
  border-top-color: #aab8d5;
}
.grip {
  position: absolute;
  right: 2px;
  bottom: 2px;
}
```
FILE: script.js
```
const colors = [
  'c00f1e', 'd7001b', 'c6456b', 'e0475c', 'ec6a6f', 'df4f8e', 'd98ab4', 'ea8580', 'ec8a98', 'f0946c', 'eda684', 'e7b89a', 'ecc7dc', 'efd0dd', 'f0dbe2',
  '0d1b45', '1c2b6b', '4a2d80', '00478f', '0b6aa8', '3a62b3', '5c86c4', '0a7fd0', '3b95d9', '1a97d9', '00a9ea', '34b9ee', '83bfe6', '97cde9', 'c6e2f0',
  '053f30', '0c5431', '0b6b64', '5a6b2a', '067a45', '259746', '12a594', '4ebcc0', '38b8b3', '18c0a2', '41b277', '20b05a', '7cb510', '97c83c', 'b3d343',
  'd2e2bd', 'e0481e', 'e8661a', 'ea7b1e', 'ec9354', 'f0a30a', 'f3aa08', 'f0b52c', 'f2bf12', 'f0cf05', 'f2e000', 'f0e468', 'e9cb80', 'e5c48b', 'eed6b0',
  '6b2468', '7c3480', '5d3a8e', '6b4f9c', '8e5f9f', '9b4f88', 'c56fa8', 'a48fd0', 'be9dc7', 'e5b7d6',
  '4a2015', '6b3225', '8a4520', 'a94f1e', 'b8743a', 'b0836a', 'dcb27c', 'cfc7be', 'bcc9c2',
  '050505', '3a3636', '555151', '6b6b6b', '828282', '979b9b', 'aaaaaa', 'bcc3c0', 'd2d2d2', 'e6e6e6'
];

const swatches = document.querySelector('.swatches');
colors.forEach(color => {
  const swatch = document.createElement('i');
  swatch.style.background = '#' + color;
  swatches.appendChild(swatch);
});

document.querySelectorAll('.ruler').forEach(ruler => {
  for (let n = Number(ruler.dataset.from); n <= Number(ruler.dataset.to); n += 10) {
    const mark = document.createElement('span');
    mark.textContent = n;
    ruler.appendChild(mark);
  }
});
```
